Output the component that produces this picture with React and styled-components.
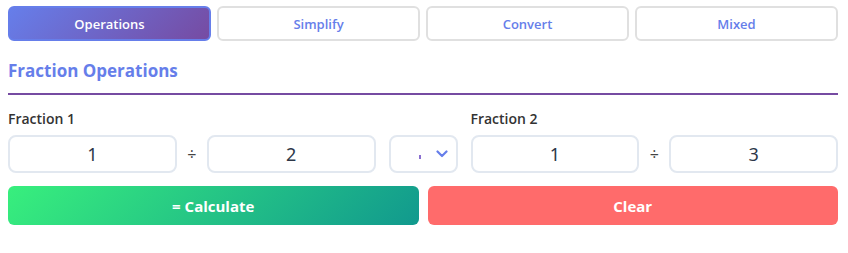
import React, { useState } from 'react';
import styled, { createGlobalStyle } from 'styled-components';

const GlobalStyle = createGlobalStyle`
  body {
    margin: 0;
    background: #fff;
    font-family: "Open Sans", "Noto Sans", sans-serif;
  }
`;

const Page = styled.div`
  padding: 6px 10px 0 8px;
`;

const Tabs = styled.div`
  display: grid;
  grid-template-columns: repeat(4, minmax(0, 1fr));
  gap: 6px;
  margin-bottom: 18px;
`;

const Tab = styled.button`
  height: 35px;
  border-radius: 6px;
  border: 2px solid ${p => (p.active ? '#667eea' : '#e0e0e0')};
  background: ${p => (p.active ? 'linear-gradient(135deg, #667eea 0%, #764ba2 100%)' : '#fff')};
  color: ${p => (p.active ? '#fff' : '#667eea')};
  font-family: inherit;
  font-size: 13px;
  font-weight: 600;
  cursor: pointer;
`;

const Heading = styled.h2`
  margin: 0 0 14px;
  font-size: 17px;
  line-height: 24px;
  font-weight: 700;
  color: #667eea;
  padding-bottom: 10px;
  border-bottom: 2px solid #764ba2;
`;

const Row = styled.div`
  display: grid;
  grid-template-columns: minmax(0, 1fr) 69px minmax(0, 1fr);
  gap: 13px;
  align-items: end;
`;

const Group = styled.div`
  display: flex;
  flex-direction: column;
  min-width: 0;
`;

const Label = styled.label`
  font-size: 14px;
  line-height: 20px;
  font-weight: 600;
  color: #333;
  margin-bottom: 6px;
`;

const FractionInputs = styled.div`
  display: flex;
  align-items: center;
  gap: 9px;
`;

const NumInput = styled.input`
  flex: 1;
  width: 0;
  min-width: 0;
  height: 38px;
  box-sizing: border-box;
  border: 2px solid #e2e8f0;
  border-radius: 8px;
  text-align: center;
  font-family: "Noto Sans", sans-serif;
  font-size: 18px;
  color: #2d3748;
  outline: none;
`;

const Divide = styled.span`
  width: 12px;
  text-align: center;
  font-size: 16px;
  color: #444;
`;

const SelectBox = styled.div`
  position: relative;
  height: 38px;
  box-sizing: border-box;
  border: 2px solid #e2e8f0;
  border-radius: 8px;
  display: flex;
  align-items: center;
`;

const Mark = styled.span`
  width: 2px;
  height: 4px;
  margin-left: 28px;
  margin-top: 6px;
  background: #8a6fd0;
`;

const Chevron = styled.svg`
  position: absolute;
  right: 8px;
  top: 50%;
  transform: translateY(-50%);
`;

const Actions = styled.div`
  display: grid;
  grid-template-columns: 1fr 1fr;
  gap: 9px;
  margin-top: 13px;
`;

const ActionButton = styled.button`
  height: 39px;
  border: none;
  border-radius: 6px;
  color: #fff;
  font-family: inherit;
  font-size: 15px;
  font-weight: 700;
  background: ${p => (p.variant === 'primary' ? 'linear-gradient(135deg, #38ef7d 0%, #11998e 100%)' : '#ff6b6b')};
  cursor: pointer;
`;

const tabs = ['Operations', 'Simplify', 'Convert', 'Mixed'];

export default function App() {
  const [active, setActive] = useState('Operations');
  const [f1, setF1] = useState({ n: '1', d: '2' });
  const [f2, setF2] = useState({ n: '1', d: '3' });

  return (
    <Page>
      <GlobalStyle />
      <Tabs>
        {tabs.map(t => (
          <Tab key={t} active={t === active ? 1 : 0} onClick={() => setActive(t)}>
            {t}
          </Tab>
        ))}
      </Tabs>
      <Heading>Fraction Operations</Heading>
      <Row>
        <Group>
          <Label>Fraction 1</Label>
          <FractionInputs>
            <NumInput value={f1.n} onChange={e => setF1({ ...f1, n: e.target.value })} />
            <Divide>÷</Divide>
            <NumInput value={f1.d} onChange={e => setF1({ ...f1, d: e.target.value })} />
          </FractionInputs>
        </Group>
        <SelectBox>
          <Mark />
          <Chevron width="12" height="8" viewBox="0 0 12 8">
            <path d="M1.5 1.5 L6 6 L10.5 1.5" fill="none" stroke="#667eea" strokeWidth="2.2" strokeLinecap="round" strokeLinejoin="round" />
          </Chevron>
        </SelectBox>
        <Group>
          <Label>Fraction 2</Label>
          <FractionInputs>
            <NumInput value={f2.n} onChange={e => setF2({ ...f2, n: e.target.value })} />
            <Divide>÷</Divide>
            <NumInput value={f2.d} onChange={e => setF2({ ...f2, d: e.target.value })} />
          </FractionInputs>
        </Group>
      </Row>
      <Actions>
        <ActionButton variant="primary">= Calculate</ActionButton>
        <ActionButton>Clear</ActionButton>
      </Actions>
    </Page>
  );
}
